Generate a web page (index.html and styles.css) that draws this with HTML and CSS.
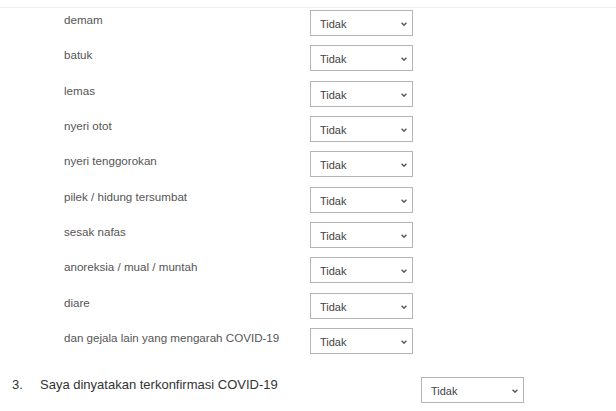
FILE: index.html
```html
<!DOCTYPE html>
<html lang="id">
<head>
    <meta charset="UTF-8">
    <title>Gejala</title>
    <link rel="stylesheet" href="styles.css">
</head>
<body>
    <div class="divider"></div>
    <div class="symptoms">
        <div class="row"><span class="label">demam</span><div class="select"><span>Tidak</span><svg viewBox="0 0 6 4" width="6" height="4"><path d="M0.6 0.8 L3 3.2 L5.4 0.8" fill="none" stroke="#555" stroke-width="1.4"/></svg></div></div>
        <div class="row"><span class="label">batuk</span><div class="select"><span>Tidak</span><svg viewBox="0 0 6 4" width="6" height="4"><path d="M0.6 0.8 L3 3.2 L5.4 0.8" fill="none" stroke="#555" stroke-width="1.4"/></svg></div></div>
        <div class="row"><span class="label">lemas</span><div class="select"><span>Tidak</span><svg viewBox="0 0 6 4" width="6" height="4"><path d="M0.6 0.8 L3 3.2 L5.4 0.8" fill="none" stroke="#555" stroke-width="1.4"/></svg></div></div>
        <div class="row"><span class="label">nyeri otot</span><div class="select"><span>Tidak</span><svg viewBox="0 0 6 4" width="6" height="4"><path d="M0.6 0.8 L3 3.2 L5.4 0.8" fill="none" stroke="#555" stroke-width="1.4"/></svg></div></div>
        <div class="row"><span class="label">nyeri tenggorokan</span><div class="select"><span>Tidak</span><svg viewBox="0 0 6 4" width="6" height="4"><path d="M0.6 0.8 L3 3.2 L5.4 0.8" fill="none" stroke="#555" stroke-width="1.4"/></svg></div></div>
        <div class="row"><span class="label">pilek / hidung tersumbat</span><div class="select"><span>Tidak</span><svg viewBox="0 0 6 4" width="6" height="4"><path d="M0.6 0.8 L3 3.2 L5.4 0.8" fill="none" stroke="#555" stroke-width="1.4"/></svg></div></div>
        <div class="row"><span class="label">sesak nafas</span><div class="select"><span>Tidak</span><svg viewBox="0 0 6 4" width="6" height="4"><path d="M0.6 0.8 L3 3.2 L5.4 0.8" fill="none" stroke="#555" stroke-width="1.4"/></svg></div></div>
        <div class="row"><span class="label">anoreksia / mual / muntah</span><div class="select"><span>Tidak</span><svg viewBox="0 0 6 4" width="6" height="4"><path d="M0.6 0.8 L3 3.2 L5.4 0.8" fill="none" stroke="#555" stroke-width="1.4"/></svg></div></div>
        <div class="row"><span class="label">diare</span><div class="select"><span>Tidak</span><svg viewBox="0 0 6 4" width="6" height="4"><path d="M0.6 0.8 L3 3.2 L5.4 0.8" fill="none" stroke="#555" stroke-width="1.4"/></svg></div></div>
        <div class="row"><span class="label">dan gejala lain yang mengarah COVID-19</span><div class="select"><span>Tidak</span><svg viewBox="0 0 6 4" width="6" height="4"><path d="M0.6 0.8 L3 3.2 L5.4 0.8" fill="none" stroke="#555" stroke-width="1.4"/></svg></div></div>
    </div>
    <div class="question">
        <span class="num">3.</span>
        <span class="qtext">Saya dinyatakan terkonfirmasi COVID-19</span>
        <div class="select"><span>Tidak</span><svg viewBox="0 0 6 4" width="6" height="4"><path d="M0.6 0.8 L3 3.2 L5.4 0.8" fill="none" stroke="#555" stroke-width="1.4"/></svg></div>
    </div>
</body>
</html>
```

FILE: styles.css
```css
body { margin: 0; background: #fff; font-family: "Liberation Sans", Arial, sans-serif; color: #555; }
.divider { margin-top: 7px; border-top: 1px solid #efefef; }
.symptoms { padding-left: 64px; }
.row { display: grid; grid-template-columns: 246px 103px; height: 35.33px; padding-top: 2px; box-sizing: border-box; }
.label { font-size: 11.6px; line-height: 15px; padding-top: 2px; }
.select { display: flex; align-items: center; justify-content: space-between; box-sizing: border-box; width: 103px; height: 26px; border: 1px solid #b4b4b4; padding: 2px 5px 0 9px; font-size: 11px; color: #444; background: #fff; }
.select svg { display: block; }
.question { display: flex; align-items: flex-start; margin-top: 16px; font-size: 13px; color: #333; }
.num { width: 28px; padding-left: 12px; }
.qtext { width: 381px; }
```
